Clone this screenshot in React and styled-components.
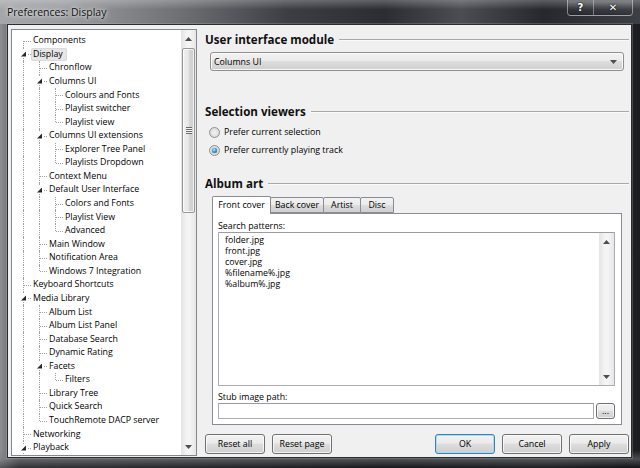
import React from 'react';
import styled, { createGlobalStyle, css } from 'styled-components';

const GlobalStyle = createGlobalStyle`
  html, body { margin: 0; padding: 0; background: #1c1e22; }
  body {
    font-family: "Open Sans", "Noto Sans", sans-serif;
    font-size: 8.8px;
    color: #000;
  }
  * { box-sizing: border-box; }
`;

const treeData = [
  { label: 'Components', level: 0 },
  { label: 'Display', level: 0, open: true, selected: true },
  { label: 'Chronflow', level: 1 },
  { label: 'Columns UI', level: 1, open: true },
  { label: 'Colours and Fonts', level: 2 },
  { label: 'Playlist switcher', level: 2 },
  { label: 'Playlist view', level: 2 },
  { label: 'Columns UI extensions', level: 1, open: true },
  { label: 'Explorer Tree Panel', level: 2 },
  { label: 'Playlists Dropdown', level: 2 },
  { label: 'Context Menu', level: 1 },
  { label: 'Default User Interface', level: 1, open: true },
  { label: 'Colors and Fonts', level: 2 },
  { label: 'Playlist View', level: 2 },
  { label: 'Advanced', level: 2 },
  { label: 'Main Window', level: 1 },
  { label: 'Notification Area', level: 1 },
  { label: 'Windows 7 Integration', level: 1 },
  { label: 'Keyboard Shortcuts', level: 0 },
  { label: 'Media Library', level: 0, open: true },
  { label: 'Album List', level: 1 },
  { label: 'Album List Panel', level: 1 },
  { label: 'Database Search', level: 1 },
  { label: 'Dynamic Rating', level: 1 },
  { label: 'Facets', level: 1, open: true },
  { label: 'Filters', level: 2 },
  { label: 'Library Tree', level: 1 },
  { label: 'Quick Search', level: 1 },
  { label: 'TouchRemote DACP server', level: 1 },
  { label: 'Networking', level: 0 },
  { label: 'Playback', level: 0, open: true },
  // list continues below the visible area
  { label: 'Output', level: 1, hidden: true },
];

// does the row at index i have a later sibling at the same level?
const hasNextSibling = (i) => {
  const lvl = treeData[i].level;
  for (let j = i + 1; j < treeData.length; j++) {
    if (treeData[j].level < lvl) return false;
    if (treeData[j].level === lvl) return true;
  }
  return false;
};

const buildRows = () => {
  const ancestors = [];
  return treeData.map((item, i) => {
    ancestors[item.level] = i;
    const guides = [];
    for (let d = 0; d < item.level; d++) guides.push(hasNextSibling(ancestors[d]));
    return { ...item, guides, down: hasNextSibling(i) || item.label === 'Playback', first: i === 0 };
  }).filter((r) => !r.hidden);
};

const Window = styled.div`
  width: 640px;
  height: 468px;
  display: flex;
  flex-direction: column;
  background: linear-gradient(90deg, #8d8f93 0%, #4d5055 3%, #3a3d42 30%, #23262b 60%, #2f3237 85%, #1b1d21 100%);
  overflow: hidden;
`;

const TitleBar = styled.div`
  height: 24px;
  display: flex;
  align-items: flex-start;
  background:
    linear-gradient(180deg, rgba(255,255,255,0.25) 0%, rgba(255,255,255,0) 40%),
    linear-gradient(90deg, #a4a6a9 0%, #9a9c9f 10%, #6e7074 28%, #3b3e43 45%, #2a2d32 60%, #4a4d52 72%, #25282d 85%, #3c3f44 100%);
`;

const TitleText = styled.div`
  margin: 5px 0 0 7px;
  font-size: 10.5px;
  line-height: 14px;
  color: #111;
  text-shadow: 0 0 6px rgba(255,255,255,0.9), 0 0 3px rgba(255,255,255,0.8);
`;

const CaptionGroup = styled.div`
  margin-left: auto;
  margin-right: 7px;
  display: flex;
  height: 16px;
  border: 1px solid rgba(210,214,220,0.55);
  border-top: none;
  border-radius: 0 0 4px 4px;
  background: linear-gradient(180deg, rgba(255,255,255,0.22) 0%, rgba(255,255,255,0.05) 50%, rgba(0,0,0,0.15) 100%);
  box-shadow: inset 0 0 1px rgba(0,0,0,0.6);
`;

const CaptionButton = styled.div`
  width: ${(p) => p.$w}px;
  display: flex;
  align-items: center;
  justify-content: center;
  color: #fff;
  font-family: "DejaVu Sans", sans-serif;
  font-weight: bold;
  font-size: ${(p) => p.$size}px;
  text-shadow: 0 0 2px #000;
  & + & { border-left: 1px solid rgba(210,214,220,0.45); }
`;

const Frame = styled.div`
  flex: 1;
  display: flex;
  padding: 0 8px 10px 7px;
  background:
    linear-gradient(180deg, rgba(0,0,0,0) 96%, rgba(120,122,126,0.5) 98%, rgba(0,0,0,0.4) 100%);
`;

const Client = styled.div`
  flex: 1;
  display: flex;
  background: #f0f0f0;
  border: 1px solid #2a2c30;
  box-shadow: 0 0 0 1px rgba(200,200,200,0.25);
`;

const TreeBox = styled.div`
  width: 186px;
  margin: 4px 0 1px 3px;
  border: 1px solid #828790;
  background: #fff;
  display: flex;
  overflow: hidden;
`;

const TreeList = styled.div`
  flex: 1;
  padding: 4px 0 0 3px;
`;

const Row = styled.div`
  display: flex;
  align-items: center;
  height: 13.57px;
  white-space: nowrap;
`;

const dotted = '1px dotted #a0a0a0';

const Guide = styled.div`
  width: 16px;
  height: 100%;
  flex: none;
  position: relative;
  ${(p) => p.$line && css`
    &::before {
      content: '';
      position: absolute;
      left: 8px;
      top: 0;
      bottom: 0;
      border-left: ${dotted};
    }
  `}
`;

const Connector = styled.div`
  width: 16px;
  height: 100%;
  flex: none;
  position: relative;
  &::before {
    content: '';
    position: absolute;
    left: 8px;
    top: ${(p) => (p.$first ? '50%' : '0')};
    bottom: ${(p) => (p.$down ? '0' : '50%')};
    border-left: ${dotted};
  }
  &::after {
    content: '';
    position: absolute;
    left: 9px;
    right: 0;
    top: 50%;
    border-top: ${dotted};
  }
`;

const Expander = styled.svg`
  position: absolute;
  left: 4px;
  top: 50%;
  margin-top: -4px;
  width: 9px;
  height: 8px;
  background: #fff;
  z-index: 1;
`;

const Label = styled.span`
  padding: 0 2px;
  line-height: 13px;
  border-radius: 2px;
  ${(p) => p.$selected && css`
    background: #e6e6e6;
    box-shadow: inset 0 0 0 1px #dadada;
    padding: 0 4px 0 2px;
  `}
`;

const VScroll = styled.div`
  width: 15px;
  flex: none;
  display: flex;
  flex-direction: column;
  background: linear-gradient(90deg, #e3e3e3 0%, #f4f4f4 40%, #f4f4f4 60%, #e6e6e6 100%);
`;

const ScrollArrow = styled.div`
  height: 17px;
  flex: none;
  display: flex;
  align-items: center;
  justify-content: center;
`;

const ScrollTrack = styled.div`
  flex: 1;
  display: flex;
  flex-direction: column;
`;

const Thumb = styled.div`
  margin: ${(p) => p.$top}px 1px 0 1px;
  height: ${(p) => p.$h}px;
  border: 1px solid #979797;
  border-radius: 2px;
  background: linear-gradient(90deg, #f1f1f1 0%, #e6e6e6 50%, #d6d6d6 51%, #cfcfcf 100%);
  box-shadow: inset 0 0 0 1px rgba(255,255,255,0.7);
  display: flex;
  align-items: center;
  justify-content: center;
`;

const Grip = styled.div`
  width: 6px;
  height: 7px;
  background: repeating-linear-gradient(180deg, #6a6a6a 0 1px, #f4f4f4 1px 2px);
`;

const Right = styled.div`
  flex: 1;
  display: flex;
  flex-direction: column;
  padding: 6px 2px 0 8px;
`;

const Heading = styled.div`
  display: flex;
  align-items: center;
  height: 16px;
  margin-top: ${(p) => p.$mt || 0}px;
  font-size: 11.6px;
  font-weight: bold;
  color: #111;
  &::after {
    content: '';
    flex: 1;
    margin-left: 5px;
    margin-top: 1px;
    border-top: 1px solid #a9a9a9;
    border-bottom: 1px solid #fafafa;
  }
`;

const Combo = styled.div`
  margin: 5px 5px 0 5px;
  height: 19px;
  border: 1px solid #8e8f8f;
  border-radius: 3px;
  background: linear-gradient(180deg, #f2f2f2 0%, #ebebeb 45%, #dddddd 50%, #cfcfcf 100%);
  box-shadow: inset 0 0 0 1px rgba(255,255,255,0.8);
  display: flex;
  align-items: center;
  padding: 0 6px 0 3px;
`;

const ComboText = styled.span`
  flex: 1;
`;

const RadioGroup = styled.div`
  margin-top: 4px;
  padding-left: 4px;
`;

const RadioRow = styled.label`
  display: flex;
  align-items: center;
  height: 18px;
  gap: 4px;
`;

const RadioDot = styled.span`
  width: 11px;
  height: 11px;
  border-radius: 50%;
  border: 1px solid #8e8f8f;
  background: radial-gradient(circle at 50% 50%, #f4f4f4 0%, #dcdcdc 70%, #cfcfcf 100%);
  display: flex;
  align-items: center;
  justify-content: center;
  &::after {
    content: '';
    width: 5px;
    height: 5px;
    border-radius: 50%;
    ${(p) => p.$checked && css`
      background: radial-gradient(circle at 40% 35%, #b9e6fa 0%, #3c8fcc 50%, #1a5d96 100%);
      box-shadow: 0 0 1px #0c3f72;
    `}
  }
`;

const TabStrip = styled.div`
  margin: 5px 0 0 7px;
  height: 17px;
  display: flex;
  align-items: flex-end;
  position: relative;
  z-index: 1;
`;

const Tab = styled.div`
  width: ${(p) => p.$w}px;
  height: ${(p) => (p.$active ? 18 : 16)}px;
  margin-left: -1px;
  margin-bottom: ${(p) => (p.$active ? -1 : 0)}px;
  border: 1px solid #898c95;
  border-bottom: ${(p) => (p.$active ? 'none' : '1px solid #898c95')};
  border-radius: 2px 2px 0 0;
  display: flex;
  align-items: center;
  justify-content: center;
  padding-bottom: ${(p) => (p.$active ? 2 : 0)}px;
  background: ${(p) => (p.$active ? '#fff' : 'linear-gradient(180deg, #f2f2f2 0%, #ebebeb 50%, #dddddd 51%, #cfcfcf 100%)')};
  &:first-child { margin-left: 0; }
`;

const TabPanel = styled.div`
  margin: 0 7px 0 7px;
  height: 212px;
  border: 1px solid #898c95;
  background: #fff;
  display: flex;
  flex-direction: column;
  padding: 6px 6px 5px 5px;
`;

const FieldLabel = styled.div`
  height: 12px;
  line-height: 12px;
  margin-top: ${(p) => p.$mt || 0}px;
`;

const ListBox = styled.div`
  height: 154px;
  display: flex;
  border: 1px solid #abadb3;
  border-top-color: #9a9ca3;
  border-radius: 1px;
`;

const ListText = styled.div`
  flex: 1;
  padding: 2px 0 0 6px;
  line-height: 11px;
`;

const InputRow = styled.div`
  height: 16px;
  display: flex;
`;

const TextInput = styled.div`
  flex: 1;
  border: 1px solid #abadb3;
  border-top-color: #9a9ca3;
  background: #fff;
`;

const SmallButton = styled.div`
  width: 19px;
  margin-left: 2px;
  height: 16px;
  border: 1px solid #707070;
  border-radius: 3px;
  background: linear-gradient(180deg, #f2f2f2 0%, #ebebeb 45%, #dddddd 50%, #cfcfcf 100%);
  box-shadow: inset 0 0 0 1px rgba(255,255,255,0.7);
  display: flex;
  align-items: flex-end;
  justify-content: center;
  padding-bottom: 3px;
  font-size: 9px;
  line-height: 9px;
`;

const ButtonBar = styled.div`
  margin-top: 9px;
  display: flex;
  gap: 7px;
`;

const Spacer = styled.div`
  flex: 1;
`;

const Button = styled.div`
  width: 60px;
  height: 20px;
  border: 1px solid ${(p) => (p.$default ? '#3c7fb1' : '#707070')};
  border-radius: 3px;
  background: linear-gradient(180deg, #f2f2f2 0%, #ebebeb 45%, #dddddd 50%, #cfcfcf 100%);
  box-shadow: inset 0 0 0 1px ${(p) => (p.$default ? 'rgba(160,220,250,0.9)' : 'rgba(255,255,255,0.75)')};
  display: flex;
  align-items: center;
  justify-content: center;
`;

const Arrow = ({ down }) => (
  <svg width="7" height="4" viewBox="0 0 7 4">
    <polygon points={down ? '0,0 7,0 3.5,4' : '0,4 7,4 3.5,0'} fill="#4d4d4d" />
  </svg>
);

const Tree = () => (
  <TreeList>
    {buildRows().map((r, i) => (
      <Row key={i}>
        {r.guides.map((g, d) => <Guide key={d} $line={g} />)}
        <Connector $first={r.first} $down={r.down}>
          {r.open && (
            <Expander viewBox="0 0 9 8">
              <polygon points="2,6.5 7,6.5 7,1.5" fill="#262626" />
            </Expander>
          )}
        </Connector>
        <Label $selected={r.selected}>{r.label}</Label>
      </Row>
    ))}
  </TreeList>
);

const App = () => {
  return (
    <>
      <GlobalStyle />
      <Window>
        <TitleBar>
          <TitleText>Preferences: Display</TitleText>
          <CaptionGroup>
            <CaptionButton $w={25} $size={10}>?</CaptionButton>
            <CaptionButton $w={39} $size={10}>✕</CaptionButton>
          </CaptionGroup>
        </TitleBar>
        <Frame>
          <Client>
            <TreeBox>
              <Tree />
              <VScroll>
                <ScrollArrow><Arrow /></ScrollArrow>
                <ScrollTrack>
                  <Thumb $top={1} $h={165}><Grip /></Thumb>
                </ScrollTrack>
                <ScrollArrow><Arrow down /></ScrollArrow>
              </VScroll>
            </TreeBox>

            <Right>
              <Heading>User interface module</Heading>
              <Combo>
                <ComboText>Columns UI</ComboText>
                <Arrow down />
              </Combo>

              <Heading $mt={32}>Selection viewers</Heading>
              <RadioGroup>
                <RadioRow><RadioDot />Prefer current selection</RadioRow>
                <RadioRow><RadioDot $checked />Prefer currently playing track</RadioRow>
              </RadioGroup>

              <Heading $mt={16}>Album art</Heading>
              <TabStrip>
                <Tab $w={59} $active>Front cover</Tab>
                <Tab $w={54}>Back cover</Tab>
                <Tab $w={38}>Artist</Tab>
                <Tab $w={34}>Disc</Tab>
              </TabStrip>
              <TabPanel>
                <FieldLabel>Search patterns:</FieldLabel>
                <ListBox>
                  <ListText>
                    <div>folder.jpg</div>
                    <div>front.jpg</div>
                    <div>cover.jpg</div>
                    <div>%filename%.jpg</div>
                    <div>%album%.jpg</div>
                  </ListText>
                  <VScroll>
                    <ScrollArrow><Arrow /></ScrollArrow>
                    <ScrollTrack />
                    <ScrollArrow><Arrow down /></ScrollArrow>
                  </VScroll>
                </ListBox>
                <FieldLabel $mt={5}>Stub image path:</FieldLabel>
                <InputRow>
                  <TextInput />
                  <SmallButton>...</SmallButton>
                </InputRow>
              </TabPanel>

              <ButtonBar>
                <Button>Reset all</Button>
                <Button>Reset page</Button>
                <Spacer />
                <Button $default>OK</Button>
                <Button>Cancel</Button>
                <Button>Apply</Button>
              </ButtonBar>
            </Right>
          </Client>
        </Frame>
      </Window>
    </>
  );
};

export default App;
